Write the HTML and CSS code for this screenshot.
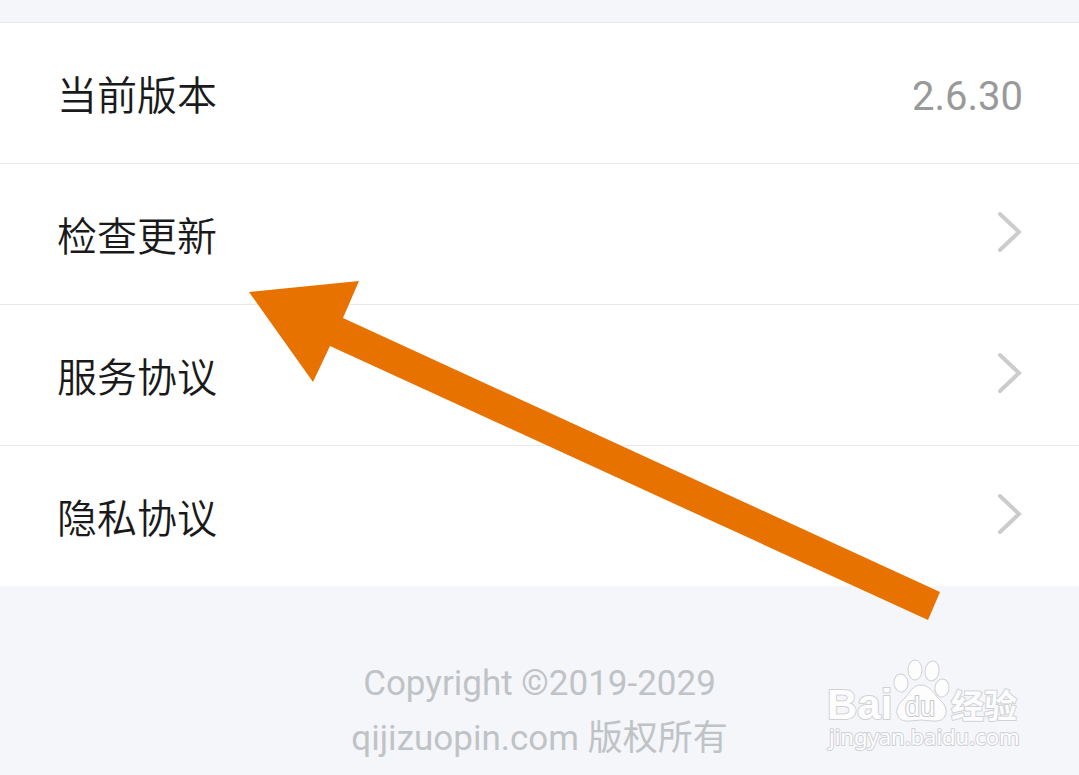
FILE: index.html
```html
<!DOCTYPE html>
<html lang="zh-CN">
<head>
    <meta charset="UTF-8">
    <meta name="viewport" content="width=device-width, initial-scale=1.0">
    <title>关于</title>
    <link rel="stylesheet" href="styles.css">
</head>
<body>
    <main class="list">
        <div class="row">
            <span class="label">当前版本</span>
            <span class="version">2.6.30</span>
        </div>
        <a class="row" href="#update">
            <span class="label">检查更新</span>
            <svg class="chevron" viewBox="0 0 26 42" aria-hidden="true"><path d="M3 3 L22 21 L3 39"/></svg>
        </a>
        <a class="row" href="#service">
            <span class="label">服务协议</span>
            <svg class="chevron" viewBox="0 0 26 42" aria-hidden="true"><path d="M3 3 L22 21 L3 39"/></svg>
        </a>
        <a class="row" href="#privacy">
            <span class="label">隐私协议</span>
            <svg class="chevron" viewBox="0 0 26 42" aria-hidden="true"><path d="M3 3 L22 21 L3 39"/></svg>
        </a>
    </main>
    <footer class="footer">
        <p>Copyright ©2019-2029</p>
        <p>qijizuopin.com 版权所有</p>
    </footer>

    <!-- 指向“检查更新”的箭头 -->
    <svg class="arrow" viewBox="0 0 692 340" aria-hidden="true">
        <polygon points="0,11 110,0 94,37 691,311 679,339 81,65 64,101"/>
    </svg>

    <!-- 水印 -->
    <svg class="watermark" viewBox="0 0 200 100" role="img" aria-label="Baidu 经验">
        <text class="mark-bai" x="3" y="61">Bai</text>
        <ellipse cx="77" cy="25" rx="7" ry="9" transform="rotate(-8 77 25)"/>
        <ellipse cx="91" cy="12" rx="7" ry="10"/>
        <ellipse cx="108" cy="13" rx="7" ry="10" transform="rotate(8 108 13)"/>
        <ellipse cx="118" cy="30" rx="7" ry="9" transform="rotate(8 118 30)"/>
        <path d="M97 27 C105 27 109 34 114 40 C121 46 124 52 121 58 C118 65 109 63 97 62 C86 63 77 65 74 58 C71 52 74 46 81 40 C86 34 89 27 97 27 Z"/>
        <text class="mark-du" x="81" y="58">du</text>
        <text class="mark-cn" x="127" y="60">经验</text>
        <text class="mark-url" x="5" y="87">jingyan.baidu.com</text>
    </svg>
</body>
</html>
```

FILE: styles.css
```css
* {
    box-sizing: border-box;
}
body {
    position: relative;
    margin: 0;
    padding-top: 22px;
    min-height: 100vh;
    overflow-x: hidden;
    background-color: #f5f6fa;
    color: #1a1a1a;
    font-family: Roboto, "Noto Sans CJK SC", sans-serif;
}
.list {
    background-color: #fff;
}
.row {
    display: flex;
    align-items: center;
    justify-content: space-between;
    height: 141px;
    padding: 8px 56px 0 57px;
    border-top: 1px solid #e9e9eb;
    color: inherit;
    font-size: 40px;
    line-height: 60px;
    text-decoration: none;
}
.label {
    font-weight: 350;
}
.version {
    color: #999;
}
.chevron {
    width: 26px;
    height: 42px;
    margin-bottom: 12px;
    fill: none;
    stroke: #ccc;
    stroke-width: 4;
    stroke-linecap: round;
}
.footer {
    padding-top: 70px;
    color: #c0c3c6;
    font-size: 35px;
    line-height: 55px;
    text-align: center;
}
.footer p {
    margin: 0;
}

/* 覆盖在页面上的箭头 */
.arrow {
    position: absolute;
    top: 281px;
    left: 249px;
    width: 692px;
    height: 340px;
    fill: #e87200;
}

/* 右下角水印 */
.watermark {
    position: absolute;
    right: 55px;
    bottom: 17px;
    width: 200px;
    height: 100px;
    fill: #fdfdfe;
    stroke: #d0d1d5;
    stroke-width: 1;
    stroke-linejoin: round;
    overflow: visible;
}
.watermark text {
    paint-order: stroke;
    stroke-width: 2;
}
.mark-bai {
    font: bold 42px "Liberation Sans", Arial, sans-serif;
}
.watermark .mark-du {
    font: 27px "Liberation Sans", Arial, sans-serif;
    stroke: #c6c8cd;
}
.mark-cn {
    font: bold 33px "Noto Sans CJK SC", sans-serif;
}
.mark-url {
    font: 22px "Noto Sans", sans-serif;
}
```
